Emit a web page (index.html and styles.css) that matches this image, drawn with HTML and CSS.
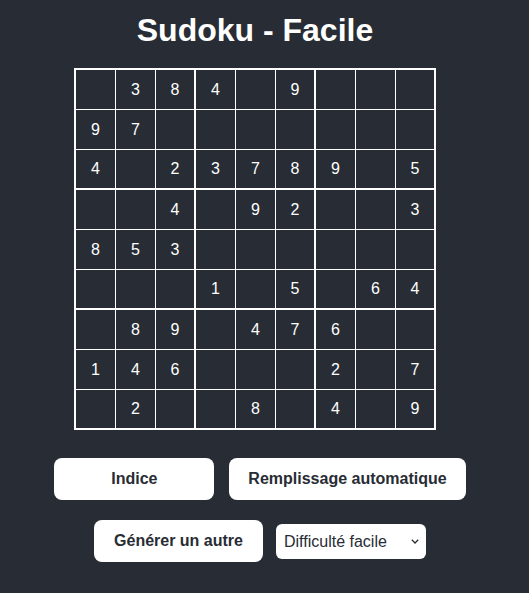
FILE: index.html
```html
<!DOCTYPE html>
<html lang="fr">
<head>
<meta charset="utf-8">
<title>Sudoku - Facile</title>
<link rel="stylesheet" href="styles.css">
</head>
<body>
<div class="app">
  <h1 class="title">Sudoku - Facile</h1>
  <div class="board">
    <div class="row"><div class="cell"></div><div class="cell">3</div><div class="cell">8</div><div class="cell">4</div><div class="cell"></div><div class="cell">9</div><div class="cell"></div><div class="cell"></div><div class="cell"></div></div>
    <div class="row"><div class="cell">9</div><div class="cell">7</div><div class="cell"></div><div class="cell"></div><div class="cell"></div><div class="cell"></div><div class="cell"></div><div class="cell"></div><div class="cell"></div></div>
    <div class="row"><div class="cell">4</div><div class="cell"></div><div class="cell">2</div><div class="cell">3</div><div class="cell">7</div><div class="cell">8</div><div class="cell">9</div><div class="cell"></div><div class="cell">5</div></div>
    <div class="row"><div class="cell"></div><div class="cell"></div><div class="cell">4</div><div class="cell"></div><div class="cell">9</div><div class="cell">2</div><div class="cell"></div><div class="cell"></div><div class="cell">3</div></div>
    <div class="row"><div class="cell">8</div><div class="cell">5</div><div class="cell">3</div><div class="cell"></div><div class="cell"></div><div class="cell"></div><div class="cell"></div><div class="cell"></div><div class="cell"></div></div>
    <div class="row"><div class="cell"></div><div class="cell"></div><div class="cell"></div><div class="cell">1</div><div class="cell"></div><div class="cell">5</div><div class="cell"></div><div class="cell">6</div><div class="cell">4</div></div>
    <div class="row"><div class="cell"></div><div class="cell">8</div><div class="cell">9</div><div class="cell"></div><div class="cell">4</div><div class="cell">7</div><div class="cell">6</div><div class="cell"></div><div class="cell"></div></div>
    <div class="row"><div class="cell">1</div><div class="cell">4</div><div class="cell">6</div><div class="cell"></div><div class="cell"></div><div class="cell"></div><div class="cell">2</div><div class="cell"></div><div class="cell">7</div></div>
    <div class="row"><div class="cell"></div><div class="cell">2</div><div class="cell"></div><div class="cell"></div><div class="cell">8</div><div class="cell"></div><div class="cell">4</div><div class="cell"></div><div class="cell">9</div></div>
  </div>
  <div class="controls controls-first">
    <button class="btn btn-min">Indice</button>
    <button class="btn btn-auto">Remplissage automatique</button>
  </div>
  <div class="controls controls-second">
    <button class="btn">Générer un autre</button>
    <div class="select-wrap">
      <select class="difficulty">
        <option>Difficulté facile</option>
        <option>Difficulté moyenne</option>
        <option>Difficulté difficile</option>
      </select>
      <svg class="chevron" width="8" height="5" viewBox="0 0 8 5"><path d="M0.8 0.8 L4 4 L7.2 0.8" fill="none" stroke="#282c34" stroke-width="1.3"/></svg>
    </div>
  </div>
</div>
</body>
</html>
```

FILE: styles.css
```css
html, body {
  margin: 0;
  padding: 0;
  background: #282c34;
}

body {
  font-family: "Liberation Sans", Arial, sans-serif;
  color: #ffffff;
  height: 593px;
  overflow: hidden;
}

.app {
  width: 510px;
  text-align: center;
}

.title {
  font-size: 32px;
  line-height: 37px;
  font-weight: bold;
  margin: 12px 0 19px;
}

.board {
  width: 362px;
  margin: 0 auto;
  border-top: 2px solid #ffffff;
  border-left: 2px solid #ffffff;
  box-sizing: border-box;
}

.row {
  display: flex;
}

.cell {
  width: 40px;
  height: 40px;
  box-sizing: border-box;
  border-right: 1px solid #ffffff;
  border-bottom: 1px solid #ffffff;
  display: flex;
  align-items: center;
  justify-content: center;
  font-size: 16px;
  color: #ffffff;
}

.cell:nth-child(3n) {
  border-right-width: 2px;
}

.row:nth-child(3n) .cell {
  border-bottom-width: 2px;
}

.controls {
  display: flex;
  justify-content: center;
  align-items: center;
}

.controls > * {
  margin-left: 10px;
}

.controls-first {
  margin-top: 28px;
  gap: 5px;
}

.controls-second {
  margin-top: 20px;
  gap: 3px;
}

.btn {
  height: 42px;
  padding: 0 20px;
  border: none;
  border-radius: 8px;
  background: #ffffff;
  color: #282c34;
  font-family: "Liberation Sans", Arial, sans-serif;
  font-size: 16px;
  font-weight: bold;
}

.btn-min {
  min-width: 160px;
}

.btn-auto {
  padding: 0 19px;
}

.select-wrap {
  position: relative;
  width: 150px;
  height: 35px;
}

.difficulty {
  -webkit-appearance: none;
  appearance: none;
  width: 150px;
  height: 35px;
  padding: 0 8px;
  border: none;
  border-radius: 6px;
  background: #ffffff;
  color: #282c34;
  font-family: "Liberation Sans", Arial, sans-serif;
  font-size: 16px;
  text-align: left;
}

.chevron {
  position: absolute;
  right: 7px;
  top: 15px;
  pointer-events: none;
}
```
